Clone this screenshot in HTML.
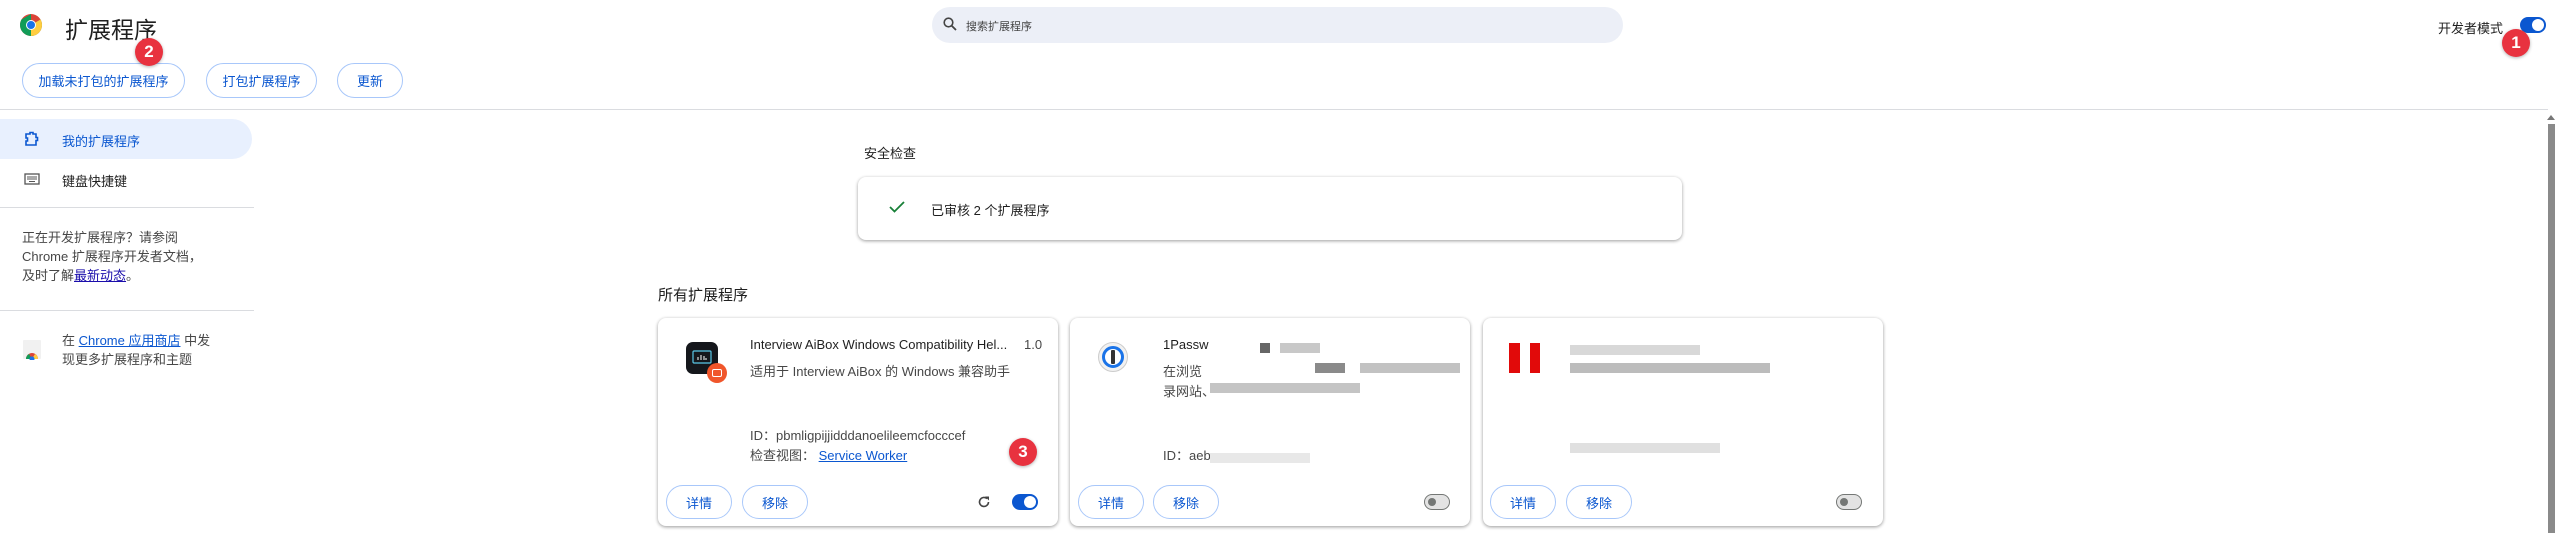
<!DOCTYPE html>
<html><head><meta charset="utf-8">
<style>
*{margin:0;padding:0;box-sizing:border-box}
body{width:2555px;height:533px;overflow:hidden;background:#fff;font-family:"Liberation Sans","Noto Sans CJK SC",sans-serif;color:#1f1f1f;position:relative}
.a{position:absolute;white-space:nowrap}
.btn{position:absolute;border:1px solid #a8c7fa;border-radius:18px;color:#0b57d0;font-size:13px;display:flex;align-items:center;justify-content:center;background:#fff}
.badge{position:absolute;width:28px;height:28px;border-radius:50%;background:#e8323f;color:#fff;font-weight:bold;font-size:17px;display:flex;align-items:center;justify-content:center;box-shadow:0 1px 3px rgba(0,0,0,.3)}
.card{position:absolute;top:318px;width:400px;height:208px;background:#fff;border-radius:8px;box-shadow:0 1px 3px rgba(0,0,0,.3),0 1px 4px rgba(0,0,0,.12)}
.tog{position:absolute;width:26px;height:16px;border-radius:8px}
.on{background:#0b57d0}.on:after{content:"";position:absolute;right:2px;top:2px;width:12px;height:12px;border-radius:50%;background:#fff}
.off{background:#e3e3e3;border:1px solid #747775}.off:after{content:"";position:absolute;left:3px;top:3px;width:8px;height:8px;border-radius:50%;background:#747775}
.g{position:absolute;background:#bdbdbd}
.t13{font-size:13px;color:#474747}
hr{position:absolute;border:0;height:1px;background:#dadce0}
</style></head><body>
<!-- header -->
<svg class="a" style="left:20px;top:14px" width="22" height="22" viewBox="0 0 22 22"><circle cx="11" cy="11" r="11" fill="#db4437"/><path d="M11 11 L20.5 5.5 A11 11 0 0 1 5.5 20.5Z" fill="#0f9d58"/><path d="M11 11 L5.5 20.5 A11 11 0 0 1 1.5 5.5 L11 0Z" fill="#0f9d58"/><path d="M11 11 L20.5 5.5 A11 11 0 0 1 11 22Z" fill="#ffcd40"/><circle cx="11" cy="11" r="5" fill="#fff"/><circle cx="11" cy="11" r="4" fill="#1a73e8"/></svg>
<div class="a" style="left:65px;top:11px;font-size:23px;color:#1f1f1f">扩展程序</div>
<div class="a" style="left:932px;top:7px;width:691px;height:36px;border-radius:18px;background:#eceff7"></div>
<svg class="a" style="left:943px;top:17px" width="14" height="14" viewBox="0 0 14 14"><circle cx="5.5" cy="5.5" r="4.3" fill="none" stroke="#444" stroke-width="1.6"/><path d="M8.7 8.7 L13 13" stroke="#444" stroke-width="1.8"/></svg>
<div class="a" style="left:966px;top:18px;font-size:11px;color:#444">搜索扩展程序</div>
<div class="a" style="left:2438px;top:18px;font-size:13px;color:#1f1f1f">开发者模式</div>
<div class="tog on" style="left:2520px;top:17px"></div>
<div class="badge" style="left:2502px;top:29px">1</div>
<div class="btn" style="left:22px;top:63px;width:163px;height:35px">加载未打包的扩展程序</div>
<div class="btn" style="left:206px;top:63px;width:111px;height:35px">打包扩展程序</div>
<div class="btn" style="left:337px;top:63px;width:66px;height:35px">更新</div>
<div class="badge" style="left:135px;top:38px">2</div>
<hr style="left:0;top:109px;width:2548px">
<!-- sidebar -->
<div class="a" style="left:0;top:119px;width:252px;height:40px;background:#e8f0fe;border-radius:0 20px 20px 0"></div>
<svg class="a" style="left:24px;top:131px" width="16" height="16" viewBox="0 0 16 16"><path d="M2 3h4V1.5h3V3h3v3.5h1.5v3H12V14H2V10h1.5V7H2z" fill="none" stroke="#0b57d0" stroke-width="1.6"/></svg>
<div class="a" style="left:62px;top:131px;font-size:13px;color:#0b57d0">我的扩展程序</div>
<svg class="a" style="left:24px;top:173px" width="16" height="12" viewBox="0 0 16 12"><rect x="1" y="1" width="14" height="10" fill="none" stroke="#555" stroke-width="1.3"/><path d="M3 4h10M3 6h10M5 8.5h6" stroke="#555" stroke-width="1"/></svg>
<div class="a" style="left:62px;top:171px;font-size:13px">键盘快捷键</div>
<hr style="left:0;top:207px;width:254px">
<div class="a" style="left:22px;top:228px;font-size:13px;line-height:19px;color:#474747">正在开发扩展程序？请参阅<br>Chrome 扩展程序开发者文档，<br>及时了解<span style="color:#1a0dab;text-decoration:underline">最新动态</span>。</div>
<hr style="left:0;top:310px;width:254px">
<svg class="a" style="left:22px;top:338px" width="20" height="22" viewBox="0 0 20 22"><rect x="1" y="2" width="18" height="19" rx="1" fill="#f1f1f1"/><path d="M4 21 A6 6 0 0 1 16 21Z" fill="#db4437"/><path d="M4 21 A6 6 0 0 1 7 16 L10 21Z" fill="#0f9d58"/><path d="M16 21 A6 6 0 0 0 13 16 L10 21Z" fill="#ffcd40"/><circle cx="10" cy="21" r="2.5" fill="#1a73e8"/></svg>
<div class="a" style="left:62px;top:331px;font-size:13px;line-height:19px;color:#474747">在 <span style="color:#0b57d0;text-decoration:underline">Chrome 应用商店</span> 中发<br>现更多扩展程序和主题</div>
<!-- main -->
<div class="a" style="left:864px;top:143px;font-size:13px">安全检查</div>
<div class="a" style="left:858px;top:177px;width:824px;height:63px;background:#fff;border-radius:8px;box-shadow:0 1px 3px rgba(0,0,0,.3),0 1px 4px rgba(0,0,0,.1)"></div>
<svg class="a" style="left:889px;top:200px" width="16" height="14" viewBox="0 0 16 14"><path d="M1 7l4.5 4.5L15 2" fill="none" stroke="#188038" stroke-width="1.8"/></svg>
<div class="a" style="left:931px;top:200px;font-size:13px">已审核 2 个扩展程序</div>
<div class="a" style="left:658px;top:284px;font-size:15px">所有扩展程序</div>
<!-- card 1 -->
<div class="card" style="left:658px"></div>
<div class="a" style="left:686px;top:342px;width:32px;height:32px;border-radius:7px;background:#15171c"></div>
<svg class="a" style="left:692px;top:350px" width="20" height="16" viewBox="0 0 20 16"><rect x="1" y="1" width="18" height="12" rx="1" fill="none" stroke="#5bc8e8" stroke-width="1.2"/><path d="M6 10V7M9 10V5M12 10V6M14 10V8" stroke="#ddd" stroke-width="1.2"/></svg>
<div class="a" style="left:707px;top:363px;width:20px;height:20px;border-radius:50%;background:#f0562b"></div>
<div class="a" style="left:712px;top:369px;width:10px;height:8px;border:1.5px solid #fff;border-radius:2px"></div>
<div class="a t13" style="left:750px;top:337px;color:#1f1f1f">Interview AiBox Windows Compatibility Hel...</div>
<div class="a t13" style="left:1024px;top:337px">1.0</div>
<div class="a t13" style="left:750px;top:361px">适用于 Interview AiBox 的 Windows 兼容助手</div>
<div class="a t13" style="left:750px;top:425px">ID：pbmligpijjidddanoelileemcfocccef</div>
<div class="a t13" style="left:750px;top:445px">检查视图： <span style="color:#0b57d0;text-decoration:underline">Service Worker</span></div>
<div class="badge" style="left:1009px;top:438px">3</div>
<div class="btn" style="left:666px;top:485px;width:66px;height:34px">详情</div>
<div class="btn" style="left:742px;top:485px;width:66px;height:34px">移除</div>
<svg class="a" style="left:977px;top:495px" width="14" height="14" viewBox="0 0 14 14"><path d="M11.5 7A4.5 4.5 0 1 1 10 3.6" fill="none" stroke="#444" stroke-width="1.6"/><path d="M8 1.5h4v4z" fill="#444"/></svg>
<div class="tog on" style="left:1012px;top:494px"></div>
<!-- card 2 -->
<div class="card" style="left:1070px"></div>
<div class="a" style="left:1098px;top:342px;width:30px;height:30px;border-radius:50%;background:#f1f1f1;border:1px solid #ccc"></div>
<div class="a" style="left:1102px;top:346px;width:22px;height:22px;border-radius:50%;border:3px solid #1a73e8;background:#fff"></div>
<div class="a" style="left:1111px;top:350px;width:4px;height:14px;background:#333;border-radius:1px"></div>
<div class="a t13" style="left:1163px;top:337px;color:#1f1f1f">1Passw</div>
<div class="a t13" style="left:1163px;top:361px">在浏览</div>
<div class="a t13" style="left:1163px;top:381px">录网站、</div>
<div class="a t13" style="left:1163px;top:445px">ID：aeb</div>
<div class="g" style="left:1260px;top:343px;width:10px;height:10px;background:#666"></div>
<div class="g" style="left:1280px;top:343px;width:40px;height:10px;background:#c8c8c8"></div>
<div class="g" style="left:1315px;top:363px;width:30px;height:10px;background:#8a8a8a"></div>
<div class="g" style="left:1360px;top:363px;width:100px;height:10px;background:#c2c2c2"></div>
<div class="g" style="left:1210px;top:383px;width:150px;height:10px;background:#c4c4c4"></div>
<div class="g" style="left:1210px;top:453px;width:100px;height:10px;background:#e8e8e8"></div>
<div class="btn" style="left:1078px;top:485px;width:66px;height:34px">详情</div>
<div class="btn" style="left:1153px;top:485px;width:66px;height:34px">移除</div>
<div class="tog off" style="left:1424px;top:494px"></div>
<!-- card 3 -->
<div class="card" style="left:1483px"></div>
<div class="a" style="left:1509px;top:343px;width:11px;height:30px;background:#e10a0a"></div>
<div class="a" style="left:1530px;top:343px;width:10px;height:30px;background:#e10a0a"></div>
<div class="g" style="left:1570px;top:345px;width:130px;height:10px;background:#d8d8d8"></div>
<div class="g" style="left:1570px;top:363px;width:200px;height:10px;background:#bcbcbc"></div>
<div class="g" style="left:1570px;top:443px;width:150px;height:10px;background:#e0e0e0"></div>
<div class="btn" style="left:1490px;top:485px;width:66px;height:34px">详情</div>
<div class="btn" style="left:1566px;top:485px;width:66px;height:34px">移除</div>
<div class="tog off" style="left:1836px;top:494px"></div>
<!-- scrollbar -->
<svg class="a" style="left:2547px;top:114px" width="8" height="6" viewBox="0 0 8 6"><path d="M0 6L4 1 8 6z" fill="#777"/></svg>
<div class="a" style="left:2548px;top:124px;width:7px;height:409px;background:#8a8a8a"></div>
</body></html>
